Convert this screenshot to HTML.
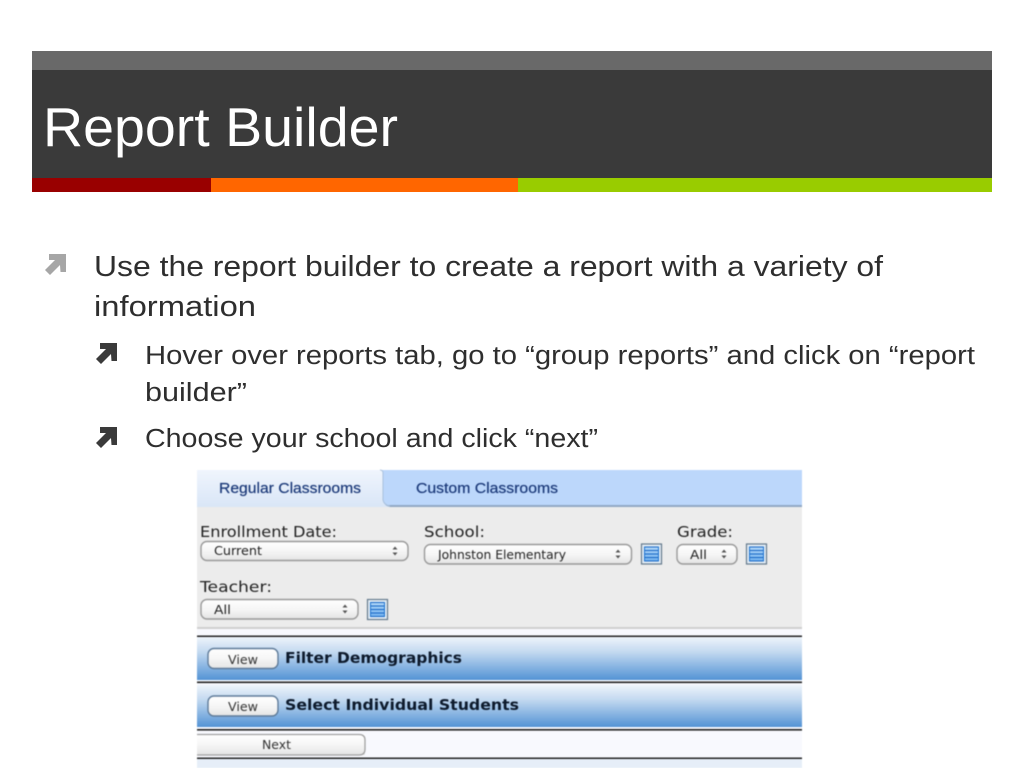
<!DOCTYPE html>
<html><head><meta charset="utf-8"><title>Report Builder</title>
<style>
html,body{margin:0;padding:0;background:#fff;width:1024px;height:768px;overflow:hidden}
svg{display:block}
.s{font-family:"Liberation Sans",sans-serif}
</style></head><body>
<svg width="1024" height="768" viewBox="0 0 1024 768" xmlns="http://www.w3.org/2000/svg">
<defs>
<linearGradient id="bar" x1="0" y1="0" x2="0" y2="1"><stop offset="0" stop-color="#eef4fb"/><stop offset=".35" stop-color="#c3d9f0"/><stop offset="1" stop-color="#5393d5"/></linearGradient>
<linearGradient id="tab" x1="0" y1="0" x2="0" y2="1"><stop offset="0" stop-color="#f0f5fd"/><stop offset="1" stop-color="#d9e6f7"/></linearGradient>
<linearGradient id="btn" x1="0" y1="0" x2="0" y2="1"><stop offset="0" stop-color="#ffffff"/><stop offset=".5" stop-color="#f6f6f6"/><stop offset="1" stop-color="#e4e4e4"/></linearGradient>
<linearGradient id="ic" x1="0" y1="0" x2="0" y2="1"><stop offset="0" stop-color="#b4d8f8"/><stop offset="1" stop-color="#6fb0ee"/></linearGradient>
<g id="arrow"><polygon points="4,0 21,0 21,18 15.5,18 15,11 5,21 0,16 10,6 4,6"/></g>
<g id="list">
<rect x=".5" y=".5" width="20" height="20" fill="#e4eef6" stroke="#64798c" stroke-width="1.2"/>
<rect x="3" y="3" width="15" height="15" fill="url(#ic)"/>
<path d="M3 3.5H18M3 7H18M3 10.5H18M3 14H18M3 17.5H18" stroke="#1565c4" stroke-width="1.1" fill="none"/>
<path d="M3.5 3V18M17.5 3V18" stroke="#1f74d0" stroke-width="1" fill="none"/>
</g>
<g id="ud"><path d="M-2.5 -1.5L0 -4.5L2.5 -1.5ZM-2.5 1.5L0 4.5L2.5 1.5Z" fill="#555"/></g>
</defs>

<rect x="32" y="51" width="960" height="19" fill="#696969"/>
<rect x="32" y="70" width="960" height="108" fill="#3a3a3a"/>
<rect x="32" y="178" width="179" height="14" fill="#990000"/>
<rect x="211" y="178" width="307" height="14" fill="#ff6600"/>
<rect x="518" y="178" width="474" height="14" fill="#99cc00"/>
<text class="s" x="43" y="146" font-size="55" fill="#ffffff" textLength="355" lengthAdjust="spacingAndGlyphs">Report Builder</text>

<use href="#arrow" x="45" y="254" fill="#a6a6a6"/>
<use href="#arrow" x="96" y="343" fill="#3a3a3a"/>
<use href="#arrow" x="96" y="427" fill="#3a3a3a"/>

<g class="s" fill="#2e2e2e">
<text x="94" y="276" font-size="29" textLength="789" lengthAdjust="spacingAndGlyphs">Use the report builder to create a report with a variety of</text>
<text x="94" y="316" font-size="29" textLength="162" lengthAdjust="spacingAndGlyphs">information</text>
<text x="145" y="364" font-size="25.5" textLength="830" lengthAdjust="spacingAndGlyphs">Hover over reports tab, go to “group reports” and click on “report</text>
<text x="145" y="401" font-size="25.5" textLength="102" lengthAdjust="spacingAndGlyphs">builder”</text>
<text x="145" y="447" font-size="25.5" textLength="453" lengthAdjust="spacingAndGlyphs">Choose your school and click “next”</text>
</g>

<g style="filter:blur(.5px)">
<rect x="197" y="470" width="605" height="36" fill="#bcd7fb"/>
<rect x="197" y="505" width="605" height="2" fill="#90a8c4"/>
<path d="M197 507V470H380Q383 470 383 473V500Q384 506 390 507Z" fill="url(#tab)"/>
<path d="M380 470Q383 470 383 473V500Q384 505 390 506" fill="none" stroke="#a9c1dd"/>
<text class="s" x="219" y="493" font-size="14.5" fill="#1a3878" stroke="#1a3878" stroke-width=".2" textLength="142" lengthAdjust="spacingAndGlyphs">Regular Classrooms</text>
<text class="s" x="416" y="493" font-size="14.5" fill="#1a3878" stroke="#1a3878" stroke-width=".2" textLength="142" lengthAdjust="spacingAndGlyphs">Custom Classrooms</text>

<rect x="197" y="507" width="605" height="121" fill="#ececec"/>
<rect x="197" y="627" width="605" height="2" fill="#cfcfcf"/>

<g font-family="'DejaVu Sans',sans-serif" fill="#222" font-size="15">
<text x="200" y="537" textLength="137" lengthAdjust="spacingAndGlyphs">Enrollment Date:</text>
<text x="424" y="537" textLength="61" lengthAdjust="spacingAndGlyphs">School:</text>
<text x="677" y="537" textLength="56" lengthAdjust="spacingAndGlyphs">Grade:</text>
<text x="200" y="592" textLength="72" lengthAdjust="spacingAndGlyphs">Teacher:</text>
</g>

<g fill="url(#btn)" stroke="#9a9a9a" stroke-width="1.4">
<rect x="201" y="541.5" width="207" height="19" rx="6"/>
<rect x="424.5" y="544.5" width="207" height="19.5" rx="6"/>
<rect x="677" y="544.5" width="60" height="19.5" rx="6"/>
<rect x="201" y="599.5" width="157" height="19.5" rx="6"/>
</g>
<g font-family="'DejaVu Sans',sans-serif" fill="#222" font-size="12">
<text x="214" y="555" textLength="48" lengthAdjust="spacingAndGlyphs">Current</text>
<text x="438" y="559" textLength="128" lengthAdjust="spacingAndGlyphs">Johnston Elementary</text>
<text x="690" y="559" textLength="17" lengthAdjust="spacingAndGlyphs">All</text>
<text x="214" y="614" textLength="17" lengthAdjust="spacingAndGlyphs">All</text>
</g>
<use href="#ud" x="395" y="551"/>
<use href="#ud" x="618" y="554"/>
<use href="#ud" x="724" y="554"/>
<use href="#ud" x="345" y="609"/>
<use href="#list" x="641" y="543.5"/>
<use href="#list" x="746" y="543.5"/>
<use href="#list" x="367" y="599"/>

<rect x="197" y="629" width="605" height="139" fill="#f8f9fe"/>
<rect x="197" y="635.5" width="605" height="1.6" fill="#222"/>
<rect x="197" y="637" width="605" height="43" fill="url(#bar)"/>
<rect x="197" y="681.5" width="605" height="1.6" fill="#222"/>
<rect x="197" y="685" width="605" height="42" fill="url(#bar)"/>
<rect x="197" y="729" width="605" height="1.6" fill="#222"/>
<rect x="197" y="757.5" width="605" height="1.6" fill="#222"/>
<rect x="197" y="759" width="605" height="9" fill="#e6eef8"/>

<g fill="url(#btn)" stroke="#5f7b99" stroke-width="1.4">
<rect x="208" y="648.5" width="70" height="20" rx="6"/>
<rect x="208" y="696" width="70" height="20" rx="6"/>
</g>
<rect x="197" y="734.5" width="168" height="20.5" fill="url(#btn)"/>
<path d="M197 734.5H359Q365 734.5 365 740V749Q365 755 359 755H197" fill="none" stroke="#a0a0a0" stroke-width="1.3"/>
<g font-family="'DejaVu Sans',sans-serif" fill="#333" font-size="12.5">
<text x="228" y="664" textLength="30" lengthAdjust="spacingAndGlyphs">View</text>
<text x="228" y="711" textLength="30" lengthAdjust="spacingAndGlyphs">View</text>
<text x="262" y="749" textLength="29" lengthAdjust="spacingAndGlyphs">Next</text>
</g>
<g font-family="'DejaVu Sans',sans-serif" font-weight="bold" fill="#0d1a2c" font-size="15">
<text x="285" y="663" textLength="177" lengthAdjust="spacingAndGlyphs">Filter Demographics</text>
<text x="285" y="710" textLength="234" lengthAdjust="spacingAndGlyphs">Select Individual Students</text>
</g>
</g>
</svg>
</body></html>
